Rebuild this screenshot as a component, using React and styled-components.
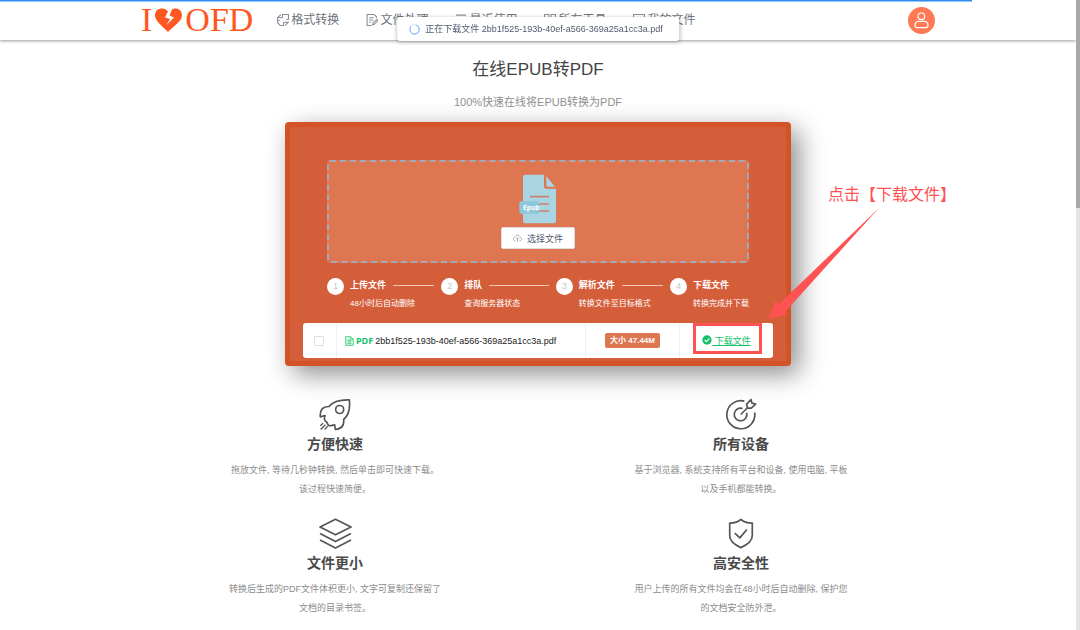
import styled, { createGlobalStyle } from "styled-components";

const navItems = [
  { label: "格式转换", icon: "convert" },
  { label: "文件处理", icon: "edit" },
  { label: "最近使用", icon: "list" },
  { label: "所有工具", icon: "grid" },
  { label: "我的文件", icon: "files" },
];

const steps = [
  { title: "上传文件", text: "48小时后自动删除" },
  { title: "排队", text: "查询服务器状态" },
  { title: "解析文件", text: "转换文件至目标格式" },
  { title: "下载文件", text: "转换完成并下载" },
];

const features = [
  {
    title: "方便快速",
    icon: RocketIcon,
    lines: ["拖放文件, 等待几秒钟转换, 然后单击即可快速下载。", "该过程快速简便。"],
  },
  {
    title: "所有设备",
    icon: TargetIcon,
    lines: ["基于浏览器, 系统支持所有平台和设备, 使用电脑, 平板", "以及手机都能转换。"],
  },
  {
    title: "文件更小",
    icon: LayersIcon,
    lines: ["转换后生成的PDF文件体积更小, 文字可复制还保留了", "文档的目录书签。"],
  },
  {
    title: "高安全性",
    icon: ShieldIcon,
    lines: ["用户上传的所有文件均会在48小时后自动删除, 保护您", "的文档安全防外泄。"],
  },
];

const fileName = "2bb1f525-193b-40ef-a566-369a25a1cc3a.pdf";

export default function App() {
  return (
    <Page>
      <GlobalStyle />
      <Progress />
      <Header>
        <HeaderInner>
          <Logo href="#" aria-label="I love OFD">
            I<HeartIcon />
            OFD
          </Logo>
          <Nav>
            {navItems.map((item) => (
              <NavLink href="#" key={item.label}>
                <NavIcon name={item.icon} />
                {item.label}
              </NavLink>
            ))}
          </Nav>
          <Avatar aria-label="账户">
            <UserIcon />
          </Avatar>
        </HeaderInner>
      </Header>
      <Toast role="status">
        <SpinnerIcon />
        正在下载文件 {fileName}
      </Toast>

      <Main>
        <Title>在线EPUB转PDF</Title>
        <Subtitle>100%快速在线将EPUB转换为PDF</Subtitle>

        <Card>
          <DropZone>
            <EpubIcon />
            <SelectButton>
              <UploadIcon />
              选择文件
            </SelectButton>
          </DropZone>

          <Steps>
            {steps.map((step, index) => (
              <Step key={step.title}>
                <StepNumber>{index + 1}</StepNumber>
                <StepBody>
                  <StepTitle>{step.title}</StepTitle>
                  <StepText>{step.text}</StepText>
                </StepBody>
              </Step>
            ))}
          </Steps>

          <FileTable>
            <tbody>
              <tr>
                <Cell $width="7%">
                  <Checkbox type="checkbox" aria-label="选择文件" />
                </Cell>
                <Cell $align="left">
                  <FileName>
                    <DocIcon />
                    <b>PDF</b>
                    {fileName}
                  </FileName>
                </Cell>
                <Cell $width="20%">
                  <Size>大小 47.44M</Size>
                </Cell>
                <Cell $width="20%">
                  <Download href="#">
                    <CheckIcon />
                    &nbsp;下载文件
                  </Download>
                </Cell>
              </tr>
            </tbody>
          </FileTable>

          <Highlight />
          <Note>点击【下载文件】</Note>
          <Arrow viewBox="0 0 112 112" aria-hidden="true">
            <path d="M111 0L17 104L20 106L0 111L8 92L10 97Z" fill="#ff5252" />
          </Arrow>
        </Card>

        <Features>
          {features.map(({ title, icon: Icon, lines }) => (
            <Feature key={title}>
              <Icon />
              <FeatureTitle>{title}</FeatureTitle>
              <FeatureText>
                {lines[0]}
                <br />
                {lines[1]}
              </FeatureText>
            </Feature>
          ))}
        </Features>
      </Main>
      <Scrollbar>
        <Thumb />
      </Scrollbar>
    </Page>
  );
}

function HeartIcon() {
  return (
    <svg width="29" height="25" viewBox="0 0 29 25">
      <path
        d="M14 24 C8 18 1 13 1 7.5 C1 3 4 .5 8 .5 C10.500 .5 12.500 1.500 14 3.500 L11 9.500 L16 11 L12.500 17 L20 9.500 L15.500 7.500 L18 1.500 C19 .8 20 .5 21.500 .5 C25.500 .5 28 3.500 28 7.500 C28 13 20 18 14 24 Z"
        fill="#ff5722"
      />
    </svg>
  );
}

function NavIcon({ name }) {
  return (
    <LineSvg width="12" height="12" viewBox="1 1 22 22">
      {name === "convert" && (
        <path d="M11 8V2L22 2V11H18M11 8H2L8 2M2 12V8M13 16V22L7 22L2 17V13H6M13 16H22L16 22" />
      )}
      {name === "edit" && (
        <path d="M20 9V6l-4-4H3v20h8M7 8h8M7 12h7M7 16h3M13 21l1-4 7-6 2 2-7 7z" />
      )}
      {name === "list" && <path d="M3 3h18M6 10h14M3 16h18M6 21h14" />}
      {name === "grid" && (
        <path d="M2 2h8v8H2zM14 2h8v8h-8zM2 14h8v8H2zM14 14h8v8h-8z" />
      )}
      {name === "files" && <path d="M2 2h20v18H2zM7 15h10M7 10h10" />}
    </LineSvg>
  );
}

function UserIcon() {
  return (
    <svg width="15" height="17" viewBox="0 0 45 51" fill="none" stroke="#fff" strokeWidth="3.500">
      <circle cx="22" cy="13" r="10" />
      <path d="M13 28H32C39 29 42 34 42 40C42 45 40 47 36 47H9C5 47 3 45 3 40C3 34 6 29 13 28Z" />
    </svg>
  );
}

function SpinnerIcon() {
  return (
    <svg width="11" height="11" viewBox="0 0 33 33" fill="none" strokeWidth="3">
      <circle cx="16" cy="16" r="14" stroke="#c6e2ff" />
      <path d="M20 3A14 14 0 1 1 5 8" stroke="#6ab0ff" />
    </svg>
  );
}

function EpubIcon() {
  return (
    <svg width="38" height="50" viewBox="0 0 114 150">
      <path
        d="M18 2H75V38Q75 44 81 44H111V140Q111 148 103 148H20Q12 148 12 140V9Q12 2 18 2Z"
        fill="#a9d5e3"
      />
      <path d="M82 6L108 38H86Q82 38 82 34Z" fill="#a9d5e3" />
      <path d="M33 68H90M58 90H90M58 111H90" stroke="#cf8068" strokeWidth="5" />
      <rect x="1" y="82" width="60" height="37" rx="5" fill="#8ec6da" />
      <text x="12" y="108" fill="#fff" fontSize="20" fontWeight="700" fontFamily="Open Sans, sans-serif">
        Epub
      </text>
    </svg>
  );
}

function UploadIcon() {
  return (
    <svg width="9" height="9" viewBox="0 0 24 24" fill="none" stroke="#999ca3" strokeWidth="2">
      <path d="M7 18H5C2 18 1 15 1 13C1 10 4 9 5 9C6 5 9 3 12 3C15 3 18 5 19 9C21 9 23 11 23 14C23 16 21 18 19 18H17M12 21V10M8 14L12 10L16 14" />
    </svg>
  );
}

function DocIcon() {
  return (
    <svg width="9" height="10" viewBox="0 0 27 30" fill="#e3f8ec" stroke="#2cc876" strokeWidth="2.500">
      <path d="M2 2H17L25 10V28H2ZM17 2V10H25M7 13H19M7 18H19M7 23H19" />
    </svg>
  );
}

function CheckIcon() {
  return (
    <svg width="10" height="10" viewBox="0 0 30 30">
      <circle cx="15" cy="15" r="14" fill="#13c26b" />
      <path d="M8 15L13 20L22 11" fill="none" stroke="#fff" strokeWidth="3.500" />
    </svg>
  );
}

function RocketIcon() {
  return (
    <FeatureSvg width="32" height="33" viewBox="0 0 96 98">
      <path d="M30 25C42 10 62 4 91 5C94 31 88 52 74 64C76 83 68 92 49 94L47 80C38 82 32 84 29 82C26 79 25 76 24 73C20 70 17 68 17 65C15 60 17 57 18 52L4 56C2 34 12 25 30 25Z" />
      <circle cx="62" cy="34" r="12" />
      <path d="M4 83L12 75M5 94L19 80M17 94L26 84" strokeWidth="4" />
    </FeatureSvg>
  );
}

function TargetIcon() {
  return (
    <FeatureSvg width="31" height="33" viewBox="0 0 93 98">
      <path d="M55 9A42 42 0 1 0 86 43" />
      <path d="M50 31A19 19 0 1 0 62 44" />
      <path d="M44 49L65 28M64 29L62 18L75 4L78 15L89 18L76 30Z" />
    </FeatureSvg>
  );
}

function LayersIcon() {
  return (
    <FeatureSvg width="33" height="33" viewBox="0 -4 98 98">
      <path d="M49 3L95 26L49 49L3 26ZM3 45L49 69L95 45M3 64L49 88L95 64" />
    </FeatureSvg>
  );
}

function ShieldIcon() {
  return (
    <FeatureSvg width="26" height="33" viewBox="-2 -4 77 98">
      <path d="M36 3C28 11 16 14 3 14V52C3 69 18 79 36 87C54 79 70 69 70 52V14C56 14 44 11 36 3Z" />
      <path d="M18 44L33 58L54 33" />
    </FeatureSvg>
  );
}

const GlobalStyle = createGlobalStyle`
  * {
    box-sizing: border-box;
  }

  body {
    margin: 0;
    background: #fff;
    font-family: "Liberation Sans", "Noto Sans CJK SC", sans-serif;
    font-size: 9px;
    overflow: hidden;
  }

  h1, h2, h3, p, ol {
    margin: 0;
    padding: 0;
  }

  button {
    font-family: inherit;
    cursor: pointer;
  }

  svg {
    flex-shrink: 0;
  }
`;

const Page = styled.div`
  padding-right: 4px;
`;

const Progress = styled.div`
  position: fixed;
  top: 0;
  left: 0;
  z-index: 3;
  width: 90%;
  height: 1px;
  background: #2d8cf0;
  box-shadow: 0 1px 0 #96c5f7;
`;

const Scrollbar = styled.div`
  position: fixed;
  top: 0;
  right: 0;
  bottom: 0;
  z-index: 3;
  width: 4px;
  background: #e4e4e4;
`;

const Thumb = styled.div`
  height: 33%;
  background: #a8a8a8;
`;

const Header = styled.header`
  height: 40px;
  box-shadow: 0 1px 3px rgba(0, 0, 0, 0.4);
`;

const HeaderInner = styled.div`
  display: flex;
  align-items: center;
  max-width: 794px;
  height: 100%;
  margin: 0 auto;
`;

const Logo = styled.a`
  display: flex;
  align-items: center;
  gap: 2px;
  color: #ff5722;
  font-family: "Liberation Serif", serif;
  font-size: 34px;
  line-height: 40px;
  text-decoration: none;
`;

const Nav = styled.nav`
  display: flex;
  flex: 1;
  gap: 27px;
  margin-left: 24px;
`;

const NavLink = styled.a`
  display: flex;
  align-items: center;
  gap: 2px;
  color: #6c727a;
  font-size: 12px;
  line-height: 16px;
  text-decoration: none;
`;

const LineSvg = styled.svg`
  fill: none;
  stroke: #8a8f96;
  stroke-width: 2;
`;

const Avatar = styled.button`
  display: grid;
  place-items: center;
  width: 27px;
  height: 27px;
  padding: 0;
  border: none;
  border-radius: 50%;
  background: #ff7a54;
`;

const Toast = styled.div`
  position: fixed;
  top: 17px;
  left: 50%;
  z-index: 2;
  display: flex;
  align-items: center;
  gap: 5px;
  height: 24px;
  padding: 0 16px 0 12px;
  border-radius: 3px;
  background: #fff;
  box-shadow: 0 1px 4px rgba(0, 0, 0, 0.3);
  color: #515a6e;
  line-height: 22px;
  white-space: nowrap;
  transform: translateX(calc(-50% - 2px));
`;

const Main = styled.main`
  display: flex;
  flex-direction: column;
  align-items: center;
  padding-top: 18px;
`;

const Title = styled.h1`
  color: #444;
  font-size: 17px;
  font-weight: 400;
  line-height: 24px;
`;

const Subtitle = styled.p`
  margin: 12px 0;
  color: #909090;
  font-size: 11px;
  line-height: 16px;
`;

const Card = styled.section`
  position: relative;
  width: 47%;
  min-width: 506px;
  padding: 33px 13px 3px;
  border: 5px solid #d35326;
  border-radius: 4px;
  background: #d45d3a;
  box-shadow: 8px 8px 26px rgba(0, 0, 0, 0.45);
`;

const DropZone = styled.div`
  display: flex;
  flex-direction: column;
  align-items: center;
  gap: 3px;
  margin: 0 24px;
  padding: 12px 0 12px;
  border: 2px dashed #a2a9b8;
  border-radius: 3px;
  background: #dd7651;
`;

const SelectButton = styled.button`
  display: flex;
  align-items: center;
  gap: 5px;
  height: 22px;
  padding: 0 11px;
  border: 1px solid #dcdee2;
  border-radius: 2px;
  background: #fff;
  color: #515a6e;
  font-size: 9px;
`;

const Steps = styled.ol`
  display: flex;
  margin: 15px 24px 13px;
  list-style: none;
`;

const Step = styled.li`
  display: flex;
  flex: 1;
  gap: 6px;

  &:last-child {
    flex: none;
  }
`;

const StepNumber = styled.span`
  width: 17px;
  height: 17px;
  border-radius: 50%;
  background: #fff;
  color: #c5c8ce;
  font-size: 9px;
  line-height: 17px;
  text-align: center;
`;

const StepBody = styled.div`
  flex: 1;
  color: #fff;
`;

const StepTitle = styled.h3`
  display: flex;
  align-items: center;
  gap: 7px;
  padding-right: 7px;
  font-size: 9px;
  line-height: 14px;

  ${Step}:not(:last-child) &::after {
    content: "";
    flex: 1;
    height: 1px;
    background: #f0c5b7;
  }
`;

const StepText = styled.p`
  margin-top: 5px;
  font-size: 8px;
  line-height: 13px;
  white-space: nowrap;
`;

const FileTable = styled.table`
  width: 100%;
  border-spacing: 0;
  border-radius: 3px;
  background: #fff;
`;

const Cell = styled.td`
  width: ${({ $width }) => $width};
  height: 35px;
  padding: 0 8px;
  text-align: ${({ $align }) => $align || "center"};
  vertical-align: middle;

  & + & {
    border-left: 1px solid #eef0f3;
  }
`;

const Checkbox = styled.input`
  appearance: none;
  display: block;
  width: 10px;
  height: 10px;
  margin: 0 auto;
  border: 1px solid #dcdee2;
  border-radius: 1px;
`;

const FileName = styled.span`
  display: flex;
  align-items: center;
  gap: 2px;
  color: #222;

  b {
    color: #13c26b;
    font-family: "Open Sans", sans-serif;
    line-height: 12px;
  }
`;

const Size = styled.span`
  display: inline-block;
  padding: 0 5px;
  border-radius: 2px;
  background: #dd7651;
  color: #fff;
  font-size: 8px;
  font-weight: 700;
  line-height: 15px;
`;

const Download = styled.a`
  display: inline-flex;
  align-items: center;
  color: #13c26b;
  text-decoration: underline;
`;

/* tutorial marks drawn over the card */
const Highlight = styled.div`
  position: absolute;
  right: 24px;
  bottom: 7px;
  width: 69px;
  height: 31px;
  border: 3px solid #ff5252;
`;

const Note = styled.p`
  position: absolute;
  top: 56px;
  left: calc(100% + 42px);
  color: #ff5252;
  font-size: 16px;
  line-height: 24px;
  white-space: nowrap;
`;

const Arrow = styled.svg`
  position: absolute;
  top: 81px;
  right: -94px;
  width: 112px;
  height: 112px;
`;

const Features = styled.section`
  display: grid;
  grid-template-columns: 1fr 1fr;
  row-gap: 18px;
  width: 100%;
  max-width: 812px;
  margin-top: 32px;
`;

const Feature = styled.article`
  display: flex;
  flex-direction: column;
  align-items: center;
`;

const FeatureSvg = styled.svg`
  fill: none;
  stroke: #555;
  stroke-width: 5;
  stroke-linejoin: round;
`;

const FeatureTitle = styled.h2`
  margin: 3px 0 7px;
  color: #4a4a4a;
  font-size: 14px;
  line-height: 20px;
`;

const FeatureText = styled.p`
  color: #8c8c8c;
  font-size: 9px;
  line-height: 19px;
  text-align: center;
  white-space: nowrap;
`;
